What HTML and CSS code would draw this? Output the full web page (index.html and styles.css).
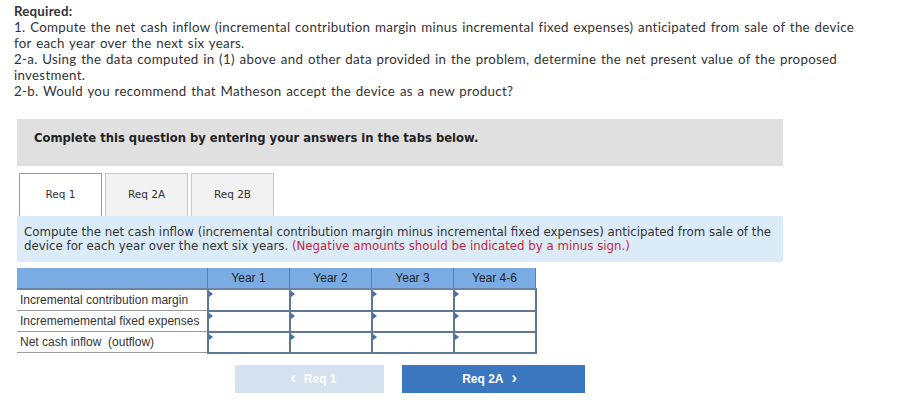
FILE: index.html
```html
<!DOCTYPE html>
<html>
<head>
<meta charset="utf-8">
<link rel="stylesheet" href="styles.css">
</head>
<body>
<div class="page">
  <div class="required">
    <div class="req-title">Required:</div>
    <div>1. Compute the net cash inflow (incremental contribution margin minus incremental fixed expenses) anticipated from sale of the device<br>for each year over the next six years.</div>
    <div>2-a. Using the data computed in (1) above and other data provided in the problem, determine the net present value of the proposed<br>investment.</div>
    <div>2-b. Would you recommend that Matheson accept the device as a new product?</div>
  </div>

  <div class="wrap">
    <div class="instructions">Complete this question by entering your answers in the tabs below.</div>

    <div class="tabs">
      <div class="tab active">Req 1</div>
      <div class="tab">Req 2A</div>
      <div class="tab">Req 2B</div>
    </div>

    <div class="prompt">Compute the net cash inflow (incremental contribution margin minus incremental fixed expenses) anticipated from sale of the<br>device for each year over the next six years. <span class="warn">(Negative amounts should be indicated by a minus sign.)</span></div>

    <table class="grid">
      <thead>
        <tr>
          <th class="lbl-h"></th>
          <th>Year 1</th>
          <th>Year 2</th>
          <th>Year 3</th>
          <th>Year 4-6</th>
        </tr>
      </thead>
      <tbody>
        <tr>
          <td class="lbl">Incremental contribution margin</td>
          <td class="in"><span class="mark"></span></td>
          <td class="in"><span class="mark"></span></td>
          <td class="in"><span class="mark"></span></td>
          <td class="in"><span class="mark"></span></td>
        </tr>
        <tr>
          <td class="lbl">Incremememental fixed expenses</td>
          <td class="in"><span class="mark"></span></td>
          <td class="in"><span class="mark"></span></td>
          <td class="in"><span class="mark"></span></td>
          <td class="in"><span class="mark"></span></td>
        </tr>
        <tr>
          <td class="lbl">Net cash inflow &nbsp;(outflow)</td>
          <td class="in"><span class="mark"></span></td>
          <td class="in"><span class="mark"></span></td>
          <td class="in"><span class="mark"></span></td>
          <td class="in"><span class="mark"></span></td>
        </tr>
      </tbody>
    </table>

    <div class="nav">
      <div class="btn prev"><span class="chev">&lsaquo;</span> Req 1</div>
      <div class="btn next">Req 2A <span class="chev">&rsaquo;</span></div>
    </div>
  </div>
</div>
</body>
</html>
```

FILE: styles.css
```css
html, body {
  margin: 0;
  padding: 0;
  background: #ffffff;
}

.page {
  padding: 3px 0 0 14px;
}

.required {
  font-family: Lato, "Open Sans", sans-serif;
  font-size: 13.3px;
  letter-spacing: 0.3px;
  word-spacing: 1px;
  line-height: 16px;
  color: #333333;
  white-space: nowrap;
}

.req-title {
  font-weight: bold;
  letter-spacing: 0.2px;
}

.wrap {
  margin: 20px 0 0 3px;
  width: 766px;
}

.instructions {
  background: #e0e0e0;
  height: 47px;
  box-sizing: border-box;
  padding: 12px 0 0 17px;
  font-family: "DejaVu Sans", Verdana, sans-serif;
  font-weight: bold;
  font-size: 11.6px;
  line-height: 14px;
  color: #222222;
  white-space: nowrap;
}

.tabs {
  display: flex;
  gap: 2px;
  margin: 7px 0 0 2px;
}

.tab {
  width: 83px;
  height: 43px;
  box-sizing: border-box;
  border: 1px solid #c8c8c8;
  border-bottom: none;
  background: #f2f2f2;
  display: flex;
  align-items: center;
  justify-content: center;
  font-family: "DejaVu Sans", Verdana, sans-serif;
  font-size: 10.5px;
  color: #333333;
  padding-bottom: 2px;
}

.tab + .tab {
  margin-left: 1px;
}

.tab.active {
  background: #ffffff;
  border-color: #9a9a9a;
}

.prompt {
  background: #dcebf8;
  height: 46px;
  box-sizing: border-box;
  padding: 9px 6px 0 7px;
  font-family: "DejaVu Sans", Verdana, sans-serif;
  font-size: 11.8px;
  line-height: 14px;
  color: #333333;
  white-space: nowrap;
}

.warn {
  color: #c4283c;
}

.grid {
  margin-top: 6px;
  border-collapse: collapse;
  font-family: "Liberation Sans", Arial, sans-serif;
  font-size: 12px;
  color: #333333;
}

.grid th {
  background: #7aace3;
  height: 20px;
  padding: 0;
  width: 81px;
  font-weight: normal;
  text-align: center;
  color: #222222;
  border-left: 1px solid #5b7ea8;
  border-right: 1px solid #5b7ea8;
  border-bottom: 2px solid #6a84a3;
}

.grid th.lbl-h {
  width: 190px;
  border-left: none;
}

.grid td.lbl {
  height: 20px;
  padding: 0 0 0 3px;
  border-bottom: 1px solid #9a9a9a;
  white-space: nowrap;
}

.grid td.in {
  position: relative;
  height: 18px;
  padding: 0;
  border: 2px solid #5f7898;
  background: #ffffff;
}

.mark {
  position: absolute;
  left: 0;
  top: 1px;
  width: 0;
  height: 0;
  border-top: 3px solid transparent;
  border-bottom: 3px solid transparent;
  border-left: 4px solid #3d6fb0;
}

.nav {
  display: flex;
  gap: 18px;
  margin: 11px 0 0 218px;
}

.btn {
  height: 28px;
  display: flex;
  align-items: center;
  justify-content: center;
  font-family: "Liberation Sans", Arial, sans-serif;
  font-weight: bold;
  font-size: 12px;
  color: #ffffff;
}

.btn.prev {
  width: 149px;
  background: #d5e1ef;
}

.btn.next {
  width: 183px;
  background: #3a77bf;
}

.chev {
  font-size: 16px;
  line-height: 16px;
  margin: 0 8px;
  position: relative;
  top: -1px;
}
```
